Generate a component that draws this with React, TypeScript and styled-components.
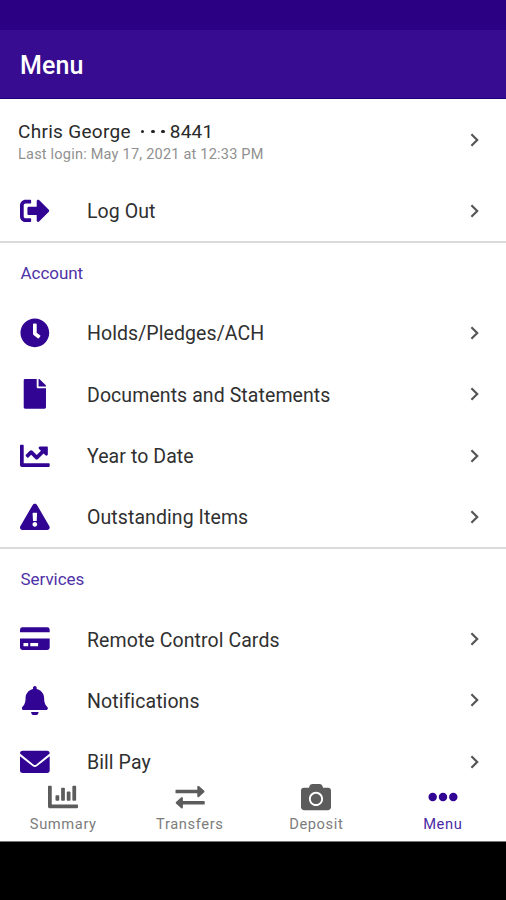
import React from 'react';
import styled, { createGlobalStyle } from 'styled-components';
import {
  FaBell,
  FaCamera,
  FaChartBar,
  FaChartLine,
  FaClock,
  FaEllipsisH,
  FaExclamationTriangle,
  FaFile,
  FaSignOutAlt,
} from 'react-icons/fa';

const GlobalStyle = createGlobalStyle`
  * { box-sizing: border-box; }
  body { margin: 0; background: #000; font-family: Roboto, sans-serif; }
`;

const purple = '#310493';

const Screen = styled.div`
  display: flex;
  flex-direction: column;
  width: 506px;
  height: 900px;
  overflow: hidden;
  background: #000;
`;

const StatusBar = styled.div`
  flex: none;
  height: 30px;
  background: #2b0083;
`;

const Header = styled.header`
  flex: none;
  display: flex;
  align-items: center;
  height: 69px;
  padding: 4px 20px 0;
  background: #370c90;
  border-bottom: 1px solid #1b0079;
`;

const Title = styled.h1`
  margin: 0;
  color: #fff;
  font-size: 25px;
  line-height: 30px;
  font-weight: 500;
  letter-spacing: 0.1px;
`;

const Content = styled.main`
  flex: none;
  height: 676px;
  overflow: hidden;
  background: #fff;
`;

const Profile = styled.div`
  display: flex;
  align-items: center;
  justify-content: space-between;
  height: 81px;
  padding: 0 25px 0 18px;
`;

const ProfileText = styled.div`
  padding-top: 4px;
`;

const ProfileName = styled.div`
  display: flex;
  align-items: center;
  color: #2a2a2a;
  font-size: 19px;
  line-height: 24px;
  letter-spacing: 0.3px;
`;

const Mask = styled.span`
  display: flex;
  gap: 6.5px;
  margin: 0 5px 0 10px;

  i {
    width: 3.6px;
    height: 3.6px;
    border-radius: 50%;
    background: #222;
  }
`;

const LastLogin = styled.div`
  color: #909090;
  font-size: 14.5px;
  line-height: 18px;
  margin-top: 2px;
  letter-spacing: 0.22px;
`;

const Section = styled.section<{ $last?: boolean }>`
  border-bottom: ${(p) => (p.$last ? '0' : '2px')} solid #dadada;
`;

const SectionTitle = styled.h2`
  display: flex;
  align-items: center;
  height: 59px;
  margin: 0;
  padding: 1px 0 0 20.5px;
  color: #4f32a6;
  font-size: 17px;
  font-weight: 400;
  letter-spacing: -0.04px;
`;

const Row = styled.div`
  display: flex;
  align-items: center;
  height: 61.3px;
  padding: 0 25px 0 20px;
`;

const RowIcon = styled.span`
  display: flex;
  width: 67px;
  color: ${purple};
`;

const RowLabel = styled.span`
  flex: 1;
  padding-top: 3px;
  color: #303030;
  font-size: 19.5px;
  line-height: 24px;
  letter-spacing: 0.08px;
`;

const Nav = styled.nav`
  flex: none;
  display: grid;
  grid-template-columns: repeat(4, 1fr);
  height: 67px;
  padding-top: 7px;
  background: #fff;
  border-bottom: 1px solid #777;
`;

const NavItem = styled.div<{ $active?: boolean }>`
  display: flex;
  flex-direction: column;
  align-items: center;
  color: ${(p) => (p.$active ? purple : '#5c5c5c')};
`;

const NavLabel = styled.span<{ $active?: boolean }>`
  margin-top: 3px;
  color: ${(p) => (p.$active ? '#4a2aa4' : '#7c7c7c')};
  font-size: 14.7px;
  line-height: 18px;
  letter-spacing: 0.6px;
`;

const ChevronSvg = styled.svg`
  flex: none;
  display: block;
`;

const Chevron = () => (
  <ChevronSvg width="12" height="16" viewBox="0 0 12 16" fill="none">
    <path d="M2.4 2.3 8.2 8l-5.8 5.7" stroke="#555" strokeWidth="2.2" />
  </ChevronSvg>
);

type IconProps = { size?: number };

const TransferIcon = ({ size = 30 }: IconProps) => (
  <svg width={size} height={size} viewBox="0 0 30 30" fill="currentColor">
    <path d="M1 7.8H22.3V5.2Q22.3 2.7 24.2 4.3L29.2 8.7Q29.9 9.5 29.2 10.3L24.2 14.7Q22.3 16.3 22.3 13.8V11.2H1Q.5 11.200 .5 10.700V8.300Q.5 7.800 1 7.800Z" />
    <path d="M29.2 19H7.900V16.400Q7.900 13.900 6 15.500L1 19.900Q.3 20.700 1 21.500L6 25.900Q7.900 27.500 7.900 25V22.400H29.200Q29.700 22.400 29.700 21.900V19.500Q29.700 19 29.200 19Z" />
  </svg>
);

const CardIcon = ({ size = 30 }: IconProps) => (
  <svg width={size} height={size} viewBox="0 0 30 30" fill="currentColor">
    <path d="M2.500 3.400h25Q30 3.400 30 5.900V8.400H0V5.900Q0 3.400 2.500 3.400Z" />
    <path
      fillRule="evenodd"
      d="M0 14.700H30V23.700Q30 26.200 27.500 26.200H2.500Q0 26.200 0 23.700ZM3.500 19.200V22.600H8.300V19.200ZM10.400 19.200V22.600H18.300V19.200Z"
    />
  </svg>
);

const EnvelopeIcon = ({ size = 30 }: IconProps) => (
  <svg width={size} height={size} viewBox="0 0 30 30" fill="currentColor">
    <path d="M2.700 3.800H27.300Q30 3.800 30 6.500L16.500 17.600Q15 18.700 13.500 17.600L0 6.500Q0 3.800 2.700 3.800Z" />
    <path d="M0 9.300 12.600 19.300Q15 21 17.400 19.300L30 9.300V23.500Q30 26.200 27.300 26.200H2.700Q0 26.200 0 23.500Z" />
  </svg>
);

type MenuIcon = React.ComponentType<IconProps>;

const MenuRow = ({ icon: Icon, label }: { icon: MenuIcon; label: string }) => (
  <Row>
    <RowIcon>
      <Icon size={29.7} />
    </RowIcon>
    <RowLabel>{label}</RowLabel>
    <Chevron />
  </Row>
);

const accountItems: [MenuIcon, string][] = [
  [FaClock, 'Holds/Pledges/ACH'],
  [FaFile, 'Documents and Statements'],
  [FaChartLine, 'Year to Date'],
  [FaExclamationTriangle, 'Outstanding Items'],
];

const serviceItems: [MenuIcon, string][] = [
  [CardIcon, 'Remote Control Cards'],
  [FaBell, 'Notifications'],
  [EnvelopeIcon, 'Bill Pay'],
];

export default function App() {
  return (
    <>
      <GlobalStyle />
      <Screen>
        <StatusBar />
        <Header>
          <Title>Menu</Title>
        </Header>
        <Content>
          <Section>
            <Profile>
              <ProfileText>
                <ProfileName>
                  Chris George
                  <Mask>
                    <i />
                    <i />
                    <i />
                  </Mask>
                  8441
                </ProfileName>
                <LastLogin>Last login: May 17, 2021 at 12:33 PM</LastLogin>
              </ProfileText>
              <Chevron />
            </Profile>
            <MenuRow icon={FaSignOutAlt} label="Log Out" />
          </Section>
          <Section>
            <SectionTitle>Account</SectionTitle>
            {accountItems.map(([icon, label]) => (
              <MenuRow key={label} icon={icon} label={label} />
            ))}
          </Section>
          <Section $last>
            <SectionTitle>Services</SectionTitle>
            {serviceItems.map(([icon, label]) => (
              <MenuRow key={label} icon={icon} label={label} />
            ))}
          </Section>
        </Content>
        <Nav>
          <NavItem>
            <FaChartBar size={30} />
            <NavLabel>Summary</NavLabel>
          </NavItem>
          <NavItem>
            <TransferIcon />
            <NavLabel>Transfers</NavLabel>
          </NavItem>
          <NavItem>
            <FaCamera size={30} />
            <NavLabel>Deposit</NavLabel>
          </NavItem>
          <NavItem $active>
            <FaEllipsisH size={30} />
            <NavLabel $active>Menu</NavLabel>
          </NavItem>
        </Nav>
      </Screen>
    </>
  );
}
